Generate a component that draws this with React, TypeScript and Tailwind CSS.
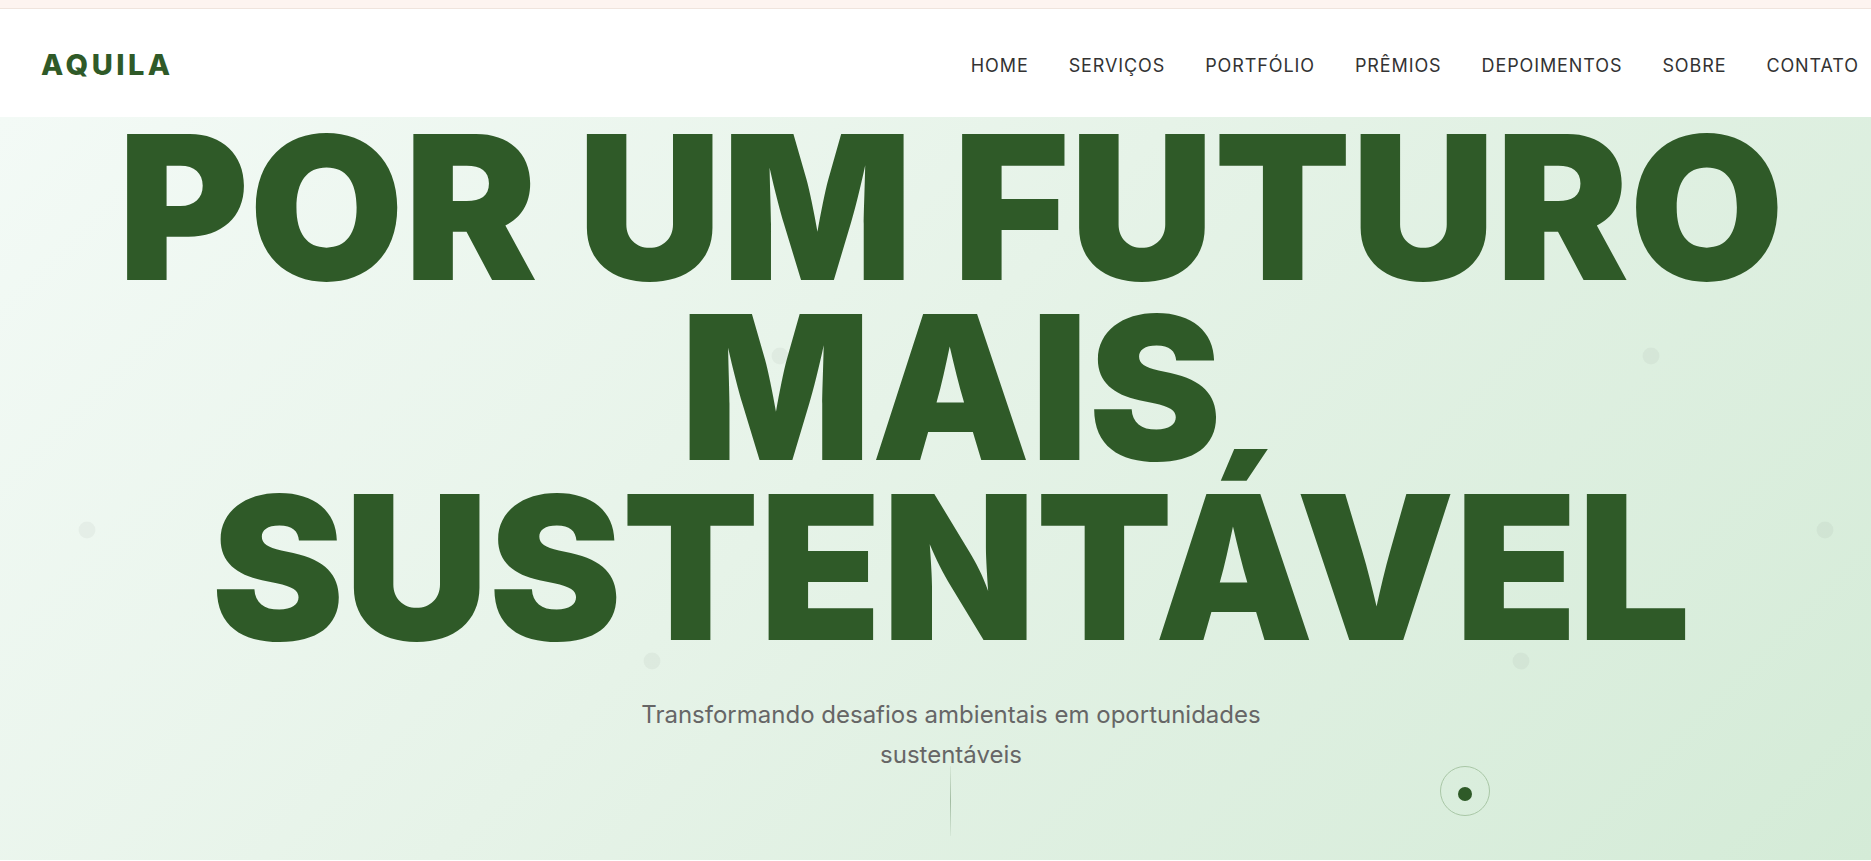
import React from "react";

const links = ["HOME", "SERVIÇOS", "PORTFÓLIO", "PRÊMIOS", "DEPOIMENTOS", "SOBRE", "CONTATO"];

const dots: { x: number; y: number }[] = [
  { x: 87, y: 531 },
  { x: 780, y: 357 },
  { x: 1651, y: 357 },
  { x: 1825, y: 531 },
  { x: 652, y: 662 },
  { x: 1521, y: 662 },
];

function Navbar() {
  return (
    <header className="bg-white">
      <div className="h-[9px] bg-[#fdf4f0] border-b border-[#efe4dd]" />
      <nav className="flex h-[108px] items-center justify-between pl-[41px] pr-[12px] pt-[4px]">
        <a href="#" className="text-[29px] font-extrabold tracking-[0.12em] text-[#2f5a28]">
          AQUILA
        </a>
        <ul className="flex items-center gap-[40px]">
          {links.map((l) => (
            <li key={l}>
              <a href="#" className="text-[18px] font-normal tracking-[0.05em] text-[#333333]">
                {l}
              </a>
            </li>
          ))}
        </ul>
      </nav>
    </header>
  );
}

function Hero() {
  return (
    <section className="relative h-[743px] overflow-hidden bg-[linear-gradient(135deg,#f3faf6_0%,#e6f3e8_45%,#d4ebd7_100%)]">
      {dots.map((d, i) => (
        <span
          key={i}
          className="absolute h-[17px] w-[17px] -translate-x-1/2 -translate-y-1/2 rounded-full bg-[#000000]/[0.035]"
          style={{ left: d.x, top: d.y - 118 }}
        />
      ))}

      <div className="relative flex flex-col items-center pl-[31px]">
        <h1 className="text-center text-[200px] font-black leading-[180px] tracking-normal text-[#2f5a28]">
          POR UM FUTURO
          <br />
          MAIS
          <br />
          SUSTENTÁVEL
        </h1>
        <p className="mt-[38px] max-w-[680px] text-center text-[24px] leading-[40px] text-[#666666]">
          Transformando desafios ambientais em oportunidades sustentáveis
        </p>
      </div>

      <div className="absolute bottom-[24px] left-[950px] h-[70px] w-px bg-[linear-gradient(to_bottom,rgba(47,90,40,0.05),rgba(47,90,40,0.35),rgba(47,90,40,0.05))]" />

      <div className="absolute left-[1440px] top-[649px] flex h-[50px] w-[50px] items-center justify-center rounded-full border border-[#a9c7a6]">
        <span className="mt-[5px] h-[14px] w-[14px] rounded-full bg-[#2f5a28]" />
      </div>
    </section>
  );
}

export default function App() {
  return (
    <div className="min-h-screen font-['Inter',sans-serif]">
      <Navbar />
      <Hero />
    </div>
  );
}
